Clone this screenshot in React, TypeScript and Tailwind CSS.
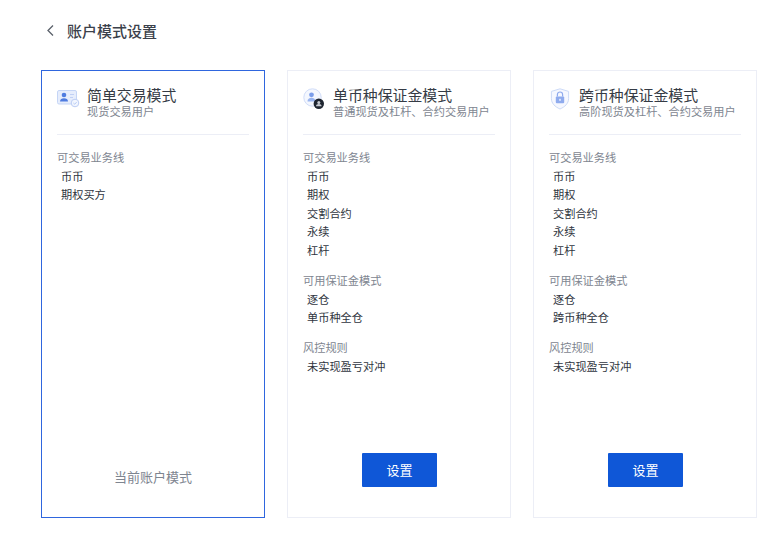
const font = { fontFamily: '"Noto Sans CJK SC", sans-serif' };

function IdIcon() {
  return (
    <svg width="23" height="20" viewBox="0 0 23 20" fill="none">
      <rect x="0.5" y="2.5" width="19" height="13.5" rx="1.5" fill="#e6edfc" stroke="#c5d5f6" />
      <circle cx="7" cy="7" r="2.3" fill="#4f7ce0" />
      <path d="M3 13.6c0-2.4 1.8-3.4 4-3.4s4 1 4 3.4z" fill="#4f7ce0" />
      <path d="M13 6.5h4M13 9.5h3" stroke="#c0d0f5" strokeWidth="1" />
      <circle cx="18" cy="15" r="3.8" fill="#f2f6fe" stroke="#bccdf4" />
      <path d="M16.4 15l1.2 1.2 2-2" stroke="#a8bff1" strokeWidth="0.9" />
    </svg>
  );
}

function UsersIcon() {
  return (
    <svg width="23" height="23" viewBox="0 0 23 23" fill="none">
      <circle cx="9.5" cy="9.5" r="8.7" fill="#f4f7fe" stroke="#d0dcf8" />
      <circle cx="8.5" cy="6.8" r="2.4" fill="#7c9eea" />
      <path d="M4.5 13.5c0-2.6 1.8-3.8 4-3.8s4 1.2 4 3.8z" fill="#9ab5ef" />
      <circle cx="15.8" cy="15.8" r="5.2" fill="#1e2530" />
      <circle cx="15.8" cy="14.4" r="1.5" fill="#c7cbd2" />
      <path d="M13 18.3c0-1.6 1.2-2.4 2.8-2.4s2.8 .8 2.8 2.4z" fill="#c7cbd2" />
    </svg>
  );
}

function ShieldIcon() {
  return (
    <svg className="ml-[1px]" width="20" height="22" viewBox="0 0 20 22" fill="none">
      <path d="M10 .8l8.6 2.6v7.2c0 4.8-3.6 8.2-8.6 10.4C5 18.8 1.4 15.4 1.4 10.6V3.4z" fill="#f6f8ff" stroke="#ccdaf7" />
      <rect x="5.8" y="8.4" width="8.4" height="6.8" rx="1" fill="#8fabee" />
      <path d="M7.4 8.4V6.6a2.6 2.6 0 015.2 0v1.8" stroke="#8fabee" strokeWidth="1.2" />
      <rect x="9.2" y="10.8" width="1.6" height="2" fill="#e8eefc" />
    </svg>
  );
}

function Section({ label, items }: { label: string; items: string[] }) {
  return (
    <div className="flex flex-col">
      <div className="text-[11.2px] leading-[18px] text-[#7e8590]">{label}</div>
      <ul className="pl-1 flex flex-col">
        {items.map((item) => (
          <li key={item} className="mt-[0.6px] text-[11.2px] leading-[18px] text-[#2f3540]">
            {item}
          </li>
        ))}
      </ul>
    </div>
  );
}

const lines = ["币币", "期权", "交割合约", "永续", "杠杆"];

const cards = [
  {
    title: "简单交易模式",
    sub: "现货交易用户",
    icon: <IdIcon />,
    active: true,
    sections: [{ label: "可交易业务线", items: ["币币", "期权买方"] }],
  },
  {
    title: "单币种保证金模式",
    sub: "普通现货及杠杆、合约交易用户",
    icon: <UsersIcon />,
    active: false,
    sections: [
      { label: "可交易业务线", items: lines },
      { label: "可用保证金模式", items: ["逐仓", "单币种全仓"] },
      { label: "风控规则", items: ["未实现盈亏对冲"] },
    ],
  },
  {
    title: "跨币种保证金模式",
    sub: "高阶现货及杠杆、合约交易用户",
    icon: <ShieldIcon />,
    active: false,
    sections: [
      { label: "可交易业务线", items: lines },
      { label: "可用保证金模式", items: ["逐仓", "跨币种全仓"] },
      { label: "风控规则", items: ["未实现盈亏对冲"] },
    ],
  },
];

export default function App() {
  return (
    <div className="w-[779px] h-[535px] bg-white overflow-hidden pl-[41px] pr-[22px]" style={font}>
      <div className="h-[70px] flex items-start pt-[21px]">
        <svg className="ml-[5px] mt-[3px]" width="9" height="13" viewBox="0 0 9 13" fill="none">
          <path d="M7 1.5L2 6.5l5 5" stroke="#5b616b" strokeWidth="1.3" />
        </svg>
        <h1 className="ml-[12px] text-[15px] leading-[20px] font-medium text-[#3b414b]">账户模式设置</h1>
      </div>

      <div className="flex gap-[22px]">
        {cards.map((card) => (
          <div
            key={card.title}
            className={`w-[224px] h-[448px] px-[15px] pt-[14px] border flex flex-col ${
              card.active ? "border-[#2f66de]" : "border-[#eceef6]"
            }`}
          >
            <div className="h-[50px] flex items-start border-b border-[#eceef6]">
              <div className="w-[30px] pt-[3px] shrink-0">{card.icon}</div>
              <div className="flex flex-col">
                <div className="text-[14.9px] leading-[20px] text-[#353b45]">{card.title}</div>
                <div className="text-[11.2px] leading-[13px] text-[#7e8590]">{card.sub}</div>
              </div>
            </div>

            <div className="mt-[13px] flex flex-col gap-[12px]">
              {card.sections.map((section) => (
                <Section key={section.label} label={section.label} items={section.items} />
              ))}
            </div>

            <div className="mt-auto h-[64px] flex justify-center items-start">
              {card.active ? (
                <span className="mt-[14px] text-[13px] leading-[20px] text-[#7e8590]">当前账户模式</span>
              ) : (
                <button className="ml-[1px] w-[75px] h-[34px] bg-[#0f57d7] rounded-[1px] text-[13px] text-white">设置</button>
              )}
            </div>
          </div>
        ))}
      </div>
    </div>
  );
}
